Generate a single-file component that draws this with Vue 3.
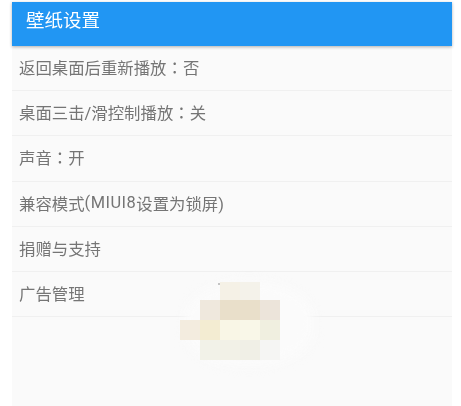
<script setup>
const rows = [
  { a: '返回桌面后重新播放', c: '：', b: '否' },
  { a: '桌面三击/滑控制播放', c: '：', b: '关' },
  { a: '声音', c: '：', b: '开' },
  { a: '兼容模式', l: '(MIUI8', b: '设置为锁屏)' },
  { a: '捐赠与支持' },
  { a: '广告管理' },
]
const blocks = [
  { x: 40, y: 0, w: 20, h: 18, c: '#f5f1e6' },
  { x: 60, y: 0, w: 20, h: 18, c: '#f4f2ea' },
  { x: 20, y: 18, w: 20, h: 20, c: '#efe8dd' },
  { x: 40, y: 18, w: 20, h: 20, c: '#e9dfca' },
  { x: 60, y: 18, w: 20, h: 20, c: '#e9dfca' },
  { x: 80, y: 18, w: 20, h: 20, c: '#ece4da' },
  { x: 0, y: 38, w: 20, h: 20, c: '#f3ecdf' },
  { x: 20, y: 38, w: 20, h: 20, c: '#f3ecd2' },
  { x: 40, y: 38, w: 20, h: 20, c: '#f9f6e6' },
  { x: 60, y: 38, w: 20, h: 20, c: '#f9f7e8' },
  { x: 80, y: 38, w: 20, h: 20, c: '#f0efe0' },
  { x: 20, y: 58, w: 20, h: 20, c: '#f2f2e8' },
  { x: 40, y: 58, w: 20, h: 20, c: '#f2f1e7' },
  { x: 60, y: 58, w: 20, h: 20, c: '#f0efe6' },
  { x: 80, y: 58, w: 20, h: 20, c: '#f5f5f3' },
]
</script>

<template>
  <div class="page">
    <div class="frame">
      <header class="bar">壁纸设置</header>
      <ul class="list">
        <li v-for="r in rows" :key="r.a" class="row">
          <span>{{ r.a }}</span><span v-if="r.l" class="latin">{{ r.l }}</span><span v-if="r.c" class="colon">{{ r.c }}</span><span v-if="r.b">{{ r.b }}</span>
        </li>
      </ul>
      <div class="halo" aria-hidden="true"></div>
      <div class="mosaic" aria-hidden="true">
        <span
          v-for="(b, i) in blocks"
          :key="i"
          class="tile"
          :style="{ left: b.x + 'px', top: b.y + 'px', width: b.w + 'px', height: b.h + 'px', background: b.c }"
        ></span>
        <span class="speck"></span>
      </div>
    </div>
  </div>
</template>

<style>
html, body { margin: 0; background: #fff; }
</style>

<style scoped>
.page {
  width: 461px;
  height: 406px;
  box-sizing: border-box;
  padding: 2px 9px 0 12px;
  overflow: hidden;
  font-family: "Roboto", "Noto Sans CJK SC", sans-serif;
}
.frame {
  position: relative;
  height: 404px;
  background: #fafafa;
  filter: blur(0.35px);
}
.bar {
  height: 44px;
  box-sizing: border-box;
  padding: 0 14px 10px;
  display: flex;
  align-items: center;
  background: #2196f3;
  color: #fff;
  font-size: 18.5px;
  box-shadow: 0 1px 3px rgba(0, 0, 0, 0.3);
  position: relative;
}
.list {
  list-style: none;
  margin: 0;
  padding: 0;
}
.row {
  height: 45.2px;
  box-sizing: border-box;
  padding: 0 7px 2px;
  display: flex;
  align-items: center;
  font-size: 16.4px;
  color: #757575;
  border-bottom: 1px solid #f0f0f0;
}
.latin {
  letter-spacing: 0.5px;
}
.colon {
  font-family: "Noto Sans CJK TC", sans-serif;
}
.halo {
  position: absolute;
  left: 172px;
  top: 280px;
  width: 130px;
  height: 84px;
  border-radius: 45%;
  background: #fbfbfb;
  filter: blur(6px);
}
.mosaic {
  position: absolute;
  left: 168px;
  top: 280px;
  width: 100px;
  height: 78px;
}
.tile {
  position: absolute;
}
.speck {
  position: absolute;
  left: 38px;
  top: 1px;
  width: 2px;
  height: 2px;
  background: #c4c4c4;
}
</style>
